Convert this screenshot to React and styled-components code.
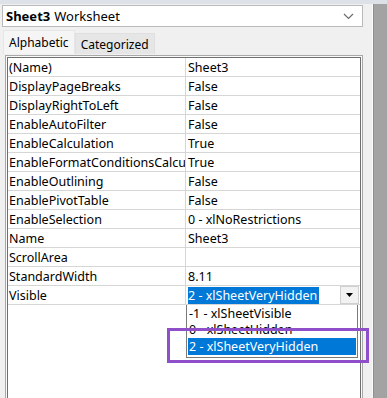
import React from "react";
import styled, { createGlobalStyle } from "styled-components";

const Global = createGlobalStyle`
  html, body { margin: 0; padding: 0; background: #f0f0f0; }
  body { font-family: "Noto Sans", "DejaVu Sans", sans-serif; font-size: 12px; color: #000; }
  * { box-sizing: border-box; }
`;

const Page = styled.div`
  display: flex;
  width: 387px;
  height: 398px;
  overflow: hidden;
  background: #f0f0f0;
  border-top: 4px solid #dde2e8;
`;

const Panel = styled.div`
  flex: 1;
  display: flex;
  flex-direction: column;
  padding: 1px 9px 0 2px;
  border-right: 1px solid #fafafa;
`;

const Strip = styled.div`
  width: 14px;
  background: #a3a3a3;
  border-left: 1px solid #8f8f8f;
`;

const ObjectSelect = styled.div`
  height: 22px;
  background: #fff;
  border: 1px solid #b9b9b9;
  display: flex;
  align-items: center;
  padding: 0 8px 0 3px;
  white-space: nowrap;
  font-size: 13px;
  b { font-weight: 700; margin-right: 4px; }
  span { flex: 1; }
`;

const Tabs = styled.div`
  display: flex;
  align-items: flex-end;
  margin-top: 3px;
  padding-left: 1px;
  height: 24px;
`;

const Tab = styled.div`
  height: ${(p) => (p.$active ? "24px" : "21px")};
  padding: 0 5px;
  display: flex;
  align-items: center;
  font-size: 12px;
  background: ${(p) => (p.$active ? "#f5f5f5" : "#e6e6e6")};
  border: 1px solid ${(p) => (p.$active ? "#e6e6e6" : "#e0e0e0")};
  border-bottom: none;
`;

const GridOuter = styled.div`
  flex: 1;
  margin: 1px 0 0 3px;
  border: 1px solid #a8a8a8;
  border-bottom: none;
  padding: 1px 1px 0 1px;
  background: #fafafa;
`;

const Grid = styled.div`
  position: relative;
  height: 100%;
  background: #fff;
  border: 1px solid #6f6f6f;
  border-bottom: none;
`;

const Row = styled.div`
  display: grid;
  grid-template-columns: 178px 1fr;
  height: 19px;
  border-bottom: 1px solid #d6d6d6;
`;

const Cell = styled.div`
  display: flex;
  align-items: center;
  padding-left: ${(p) => (p.$value ? "2px" : "1px")};
  white-space: nowrap;
  overflow: hidden;
  font-size: 12.5px;
  border-right: ${(p) => (p.$value ? "none" : "1px solid #d6d6d6")};
  position: relative;
`;

const Selected = styled.span`
  background: #0078d7;
  color: #fff;
  height: 17px;
  display: flex;
  align-items: center;
  padding-right: 2px;
`;

const DropButton = styled.div`
  position: absolute;
  right: 1px;
  top: 0;
  width: 19px;
  height: 18px;
  background: #f2f2f2;
  border: 1px solid #d0d0d0;
  display: flex;
  align-items: center;
  justify-content: center;
  svg { display: block; }
`;

const List = styled.div`
  position: absolute;
  left: 178px;
  top: 247px;
  width: 172px;
  background: #fff;
  border: 1px solid #7a7a7a;
  border-top: none;
  padding: 0 1px 2px 1px;
`;

const Item = styled.div`
  height: 16.5px;
  display: flex;
  align-items: center;
  padding-left: 1px;
  font-size: 12.5px;
  white-space: nowrap;
  background: ${(p) => (p.$hl ? "#0078d7" : "transparent")};
  color: ${(p) => (p.$hl ? "#fff" : "#000")};
`;

const Highlight = styled.div`
  position: absolute;
  left: 159px;
  top: 270px;
  width: 202px;
  height: 35px;
  border: 3px solid #8e4fc9;
  pointer-events: none;
`;

const rows = [
  ["(Name)", "Sheet3"],
  ["DisplayPageBreaks", "False"],
  ["DisplayRightToLeft", "False"],
  ["EnableAutoFilter", "False"],
  ["EnableCalculation", "True"],
  ["EnableFormatConditionsCalculation", "True"],
  ["EnableOutlining", "False"],
  ["EnablePivotTable", "False"],
  ["EnableSelection", "0 - xlNoRestrictions"],
  ["Name", "Sheet3"],
  ["ScrollArea", ""],
  ["StandardWidth", "8.11"],
];

export default function App() {
  return (
    <>
      <Global />
      <Page>
        <Panel>
          <ObjectSelect>
            <b>Sheet3</b>
            <span>Worksheet</span>
            <svg width="11" height="7" viewBox="0 0 11 7">
              <path d="M1 1l4.5 4.5L10 1" fill="none" stroke="#6b6b6b" strokeWidth="1.2" />
            </svg>
          </ObjectSelect>
          <Tabs>
            <Tab $active>Alphabetic</Tab>
            <Tab>Categorized</Tab>
          </Tabs>
          <GridOuter>
            <Grid>
              {rows.map(([n, v]) => (
                <Row key={n}>
                  <Cell>{n}</Cell>
                  <Cell $value>{v}</Cell>
                </Row>
              ))}
              <Row>
                <Cell>Visible</Cell>
                <Cell $value>
                  <Selected>2 - xlSheetVeryHidden</Selected>
                  <DropButton>
                    <svg width="7" height="4" viewBox="0 0 7 4">
                      <path d="M0 0h7L3.5 4z" fill="#000" />
                    </svg>
                  </DropButton>
                </Cell>
              </Row>
              <List>
                <Item>-1 - xlSheetVisible</Item>
                <Item>0 - xlSheetHidden</Item>
                <Item $hl>2 - xlSheetVeryHidden</Item>
              </List>
              <Highlight />
            </Grid>
          </GridOuter>
        </Panel>
        <Strip />
      </Page>
    </>
  );
}
